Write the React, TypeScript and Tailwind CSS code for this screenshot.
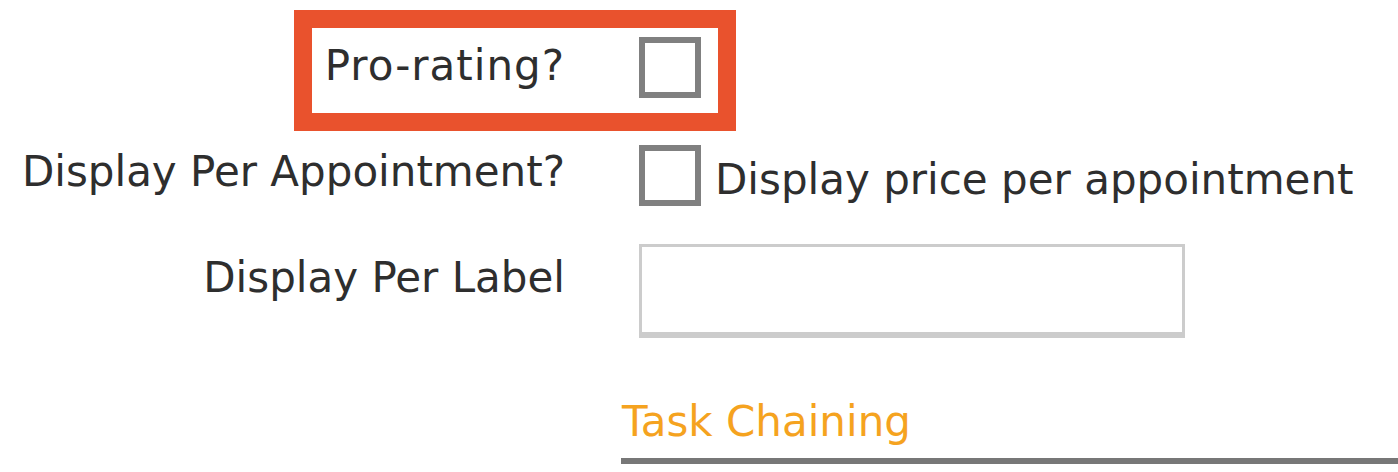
import React from 'react'

const font = { fontFamily: '"DejaVu Sans", "Open Sans", sans-serif' }

function Box() {
  return <span className="block h-[61px] w-[62px] shrink-0 border-[6px] border-[#808080] bg-white" />
}

export default function App() {
  return (
    <div className="h-[472px] w-[1398px] overflow-hidden bg-white pt-[10px] text-[#2e2e2e]" style={font}>
      {/* highlighted row */}
      <div className="ml-[294px] flex h-[121px] w-[442px] items-start border-[18px] border-[#e9522d] pt-[9px]">
        <span className="w-[253px] whitespace-nowrap text-right text-[42px] leading-[44px] tracking-[1px] mt-[7px]">Pro-rating?</span>
        <span className="ml-[74px]">
          <Box />
        </span>
      </div>

      <div className="mt-[14px] flex items-start">
        <span className="w-[565px] whitespace-nowrap text-right text-[42px] leading-[44px] mt-[5px]">Display Per Appointment?</span>
        <span className="ml-[74px] flex items-start">
          <Box />
          <span className="ml-[14px] whitespace-nowrap text-[42px] leading-[44px] mt-[13px]">Display price per appointment</span>
        </span>
      </div>

      <div className="mt-[38px] flex items-start">
        <span className="w-[565px] whitespace-nowrap text-right text-[42px] leading-[44px] mt-[12px]">Display Per Label</span>
        <input
          type="text"
          className="ml-[74px] h-[94px] w-[546px] border-[3px] border-b-[6px] border-[#cccccc] bg-white outline-none"
        />
      </div>

      <div className="ml-[621px] mt-[60px]">
        <div className="pl-[1px] whitespace-nowrap text-[42px] leading-[48px] text-[#f5a31f]">Task Chaining</div>
        <div className="mt-[12px] h-[6px] bg-[#777777]" />
      </div>
    </div>
  )
}
